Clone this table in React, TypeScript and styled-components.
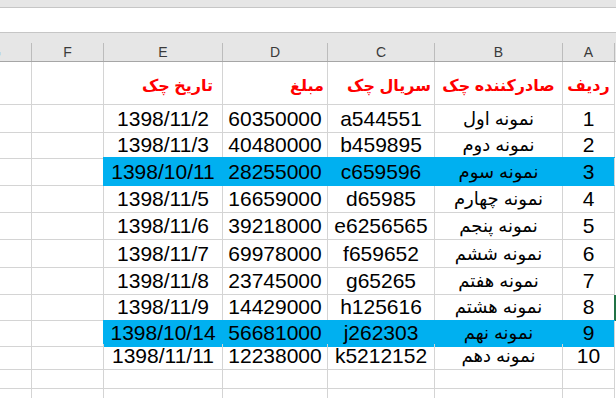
import React from "react";
import styled, { createGlobalStyle } from "styled-components";

const GlobalStyle = createGlobalStyle`
  html, body {
    margin: 0;
    padding: 0;
    background: #ffffff;
    overflow: hidden;
  }
  body {
    font-family: "Liberation Sans", "DejaVu Sans", sans-serif;
  }
  * {
    box-sizing: border-box;
  }
`;

// A, B, C, D, E, F, G (right to left)
const COLS = "53px 128px 107px 105px 119px 72px 72px";
const GRID = "#d4d4d4";
const BLUE = "#00b0f0";

const Window = styled.div`
  width: 616px;
  height: 398px;
  overflow: hidden;
  background: #ffffff;
`;

const TopStrip = styled.div`
  height: 8px;
  background: #e6e6e6;
  border-bottom: 1px solid #c6c6c6;
`;

const FormulaBar = styled.div`
  height: 25px;
  background: #ffffff;
  border-bottom: 1px solid #c6c6c6;
`;

const Sheet = styled.div`
  direction: rtl;
`;

const HeaderRow = styled.div`
  display: grid;
  grid-template-columns: ${COLS};
  height: 29px;
  padding-top: 10px;
  padding-right: 1px;
  background: #e6e6e6;
  border-bottom: 1px solid #a6a6a6;
`;

const ColLetter = styled.div<{ $first?: boolean }>`
  border-left: 1px solid #bcbcbc;
  border-right: ${(p) => (p.$first ? "1px solid #bcbcbc" : "none")};
  font-size: 14px;
  line-height: 18px;
  color: #3a3a3a;
  text-align: center;
`;

const Row = styled.div<{ $h: number }>`
  display: grid;
  grid-template-columns: ${COLS};
  height: ${(p) => p.$h}px;
  padding-right: 1px;
`;

const Cell = styled.div<{
  $first?: boolean;
  $blue?: boolean;
  $green?: boolean;
  $align: "right" | "center";
  $pad?: number;
  $head?: boolean;
  $fa?: boolean;
}>`
  display: flex;
  align-items: flex-end;
  justify-content: ${(p) => (p.$align === "right" ? "flex-start" : "center")};
  padding-right: ${(p) => p.$pad ?? 0}px;
  padding-bottom: ${(p) => (p.$head ? 7 : p.$fa ? 1 : 2)}px;
  white-space: nowrap;
  overflow: visible;
  background: ${(p) => (p.$blue ? BLUE : "transparent")};
  border-bottom: 1px solid ${(p) => (p.$blue ? BLUE : GRID)};
  border-left: 1px solid ${(p) => (p.$blue ? BLUE : GRID)};
  border-right: ${(p) =>
    p.$first ? `1px solid ${p.$green ? "#217346" : GRID}` : "none"};
  box-shadow: ${(p) =>
    p.$blue
      ? `0 -1px 0 ${BLUE}`
      : p.$green
      ? "1px 0 0 #217346"
      : "none"};
  color: ${(p) => (p.$head ? "#ff0000" : "#000000")};
  font-weight: ${(p) => (p.$head ? 700 : 400)};
  font-size: ${(p) => (p.$head ? 16 : p.$fa ? 18 : 21)}px;
  line-height: 23px;
`;

const Value = styled.span`
  direction: ltr;
  unicode-bidi: isolate;
`;

type Entry = {
  id: string;
  issuer: string;
  serial: string;
  amount: string;
  date: string;
  blue?: boolean;
};

const entries: Entry[] = [
  { id: "1", issuer: "نمونه اول", serial: "a544551", amount: "60350000", date: "1398/11/2" },
  { id: "2", issuer: "نمونه دوم", serial: "b459895", amount: "40480000", date: "1398/11/3" },
  { id: "3", issuer: "نمونه سوم", serial: "c659596", amount: "28255000", date: "1398/10/11", blue: true },
  { id: "4", issuer: "نمونه چهارم", serial: "d65985", amount: "16659000", date: "1398/11/5" },
  { id: "5", issuer: "نمونه پنجم", serial: "e6256565", amount: "39218000", date: "1398/11/6" },
  { id: "6", issuer: "نمونه ششم", serial: "f659652", amount: "69978000", date: "1398/11/7" },
  { id: "7", issuer: "نمونه هفتم", serial: "g65265", amount: "23745000", date: "1398/11/8" },
  { id: "8", issuer: "نمونه هشتم", serial: "h125616", amount: "14429000", date: "1398/11/9" },
  { id: "9", issuer: "نمونه نهم", serial: "j262303", amount: "56681000", date: "1398/10/14", blue: true },
  { id: "10", issuer: "نمونه دهم", serial: "k5212152", amount: "12238000", date: "1398/11/11" },
];

// row heights including the bottom grid line
const heights = [28, 25, 28, 27, 27, 28, 27, 26, 23, 26];

export default function App() {
  return (
    <Window>
      <GlobalStyle />
      <TopStrip />
      <FormulaBar />
      <Sheet>
        <HeaderRow>
          {["A", "B", "C", "D", "E", "F", "G"].map((l, i) => (
            <ColLetter key={l} $first={i === 0}>
              {l}
            </ColLetter>
          ))}
        </HeaderRow>

        <Row $h={43}>
          <Cell $first $head $align="center">ردیف</Cell>
          <Cell $head $align="center">صادرکننده چک</Cell>
          <Cell $head $align="right" $pad={3}>سریال چک</Cell>
          <Cell $head $align="right" $pad={3}>مبلغ</Cell>
          <Cell $head $align="right" $pad={9}>تاریخ چک</Cell>
          <Cell $align="center" />
          <Cell $align="center" />
        </Row>

        {entries.map((e, i) => (
          <Row key={e.id} $h={heights[i]}>
            <Cell $first $blue={e.blue} $green={e.id === "8"} $align="center">
              <Value>{e.id}</Value>
            </Cell>
            <Cell $blue={e.blue} $fa $align="center">
              {e.issuer}
            </Cell>
            <Cell $blue={e.blue} $align="center">
              <Value>{e.serial}</Value>
            </Cell>
            <Cell $blue={e.blue} $align="center">
              <Value>{e.amount}</Value>
            </Cell>
            <Cell $blue={e.blue} $align="center">
              <Value>{e.date}</Value>
            </Cell>
            <Cell $align="center" />
            <Cell $align="center" />
          </Row>
        ))}

        <Row $h={19}>
          <Cell $first $align="center" />
          {[0, 1, 2, 3, 4, 5].map((k) => (
            <Cell key={k} $align="center" />
          ))}
        </Row>
        <Row $h={20}>
          <Cell $first $align="center" />
          {[0, 1, 2, 3, 4, 5].map((k) => (
            <Cell key={k} $align="center" />
          ))}
        </Row>
      </Sheet>
    </Window>
  );
}
